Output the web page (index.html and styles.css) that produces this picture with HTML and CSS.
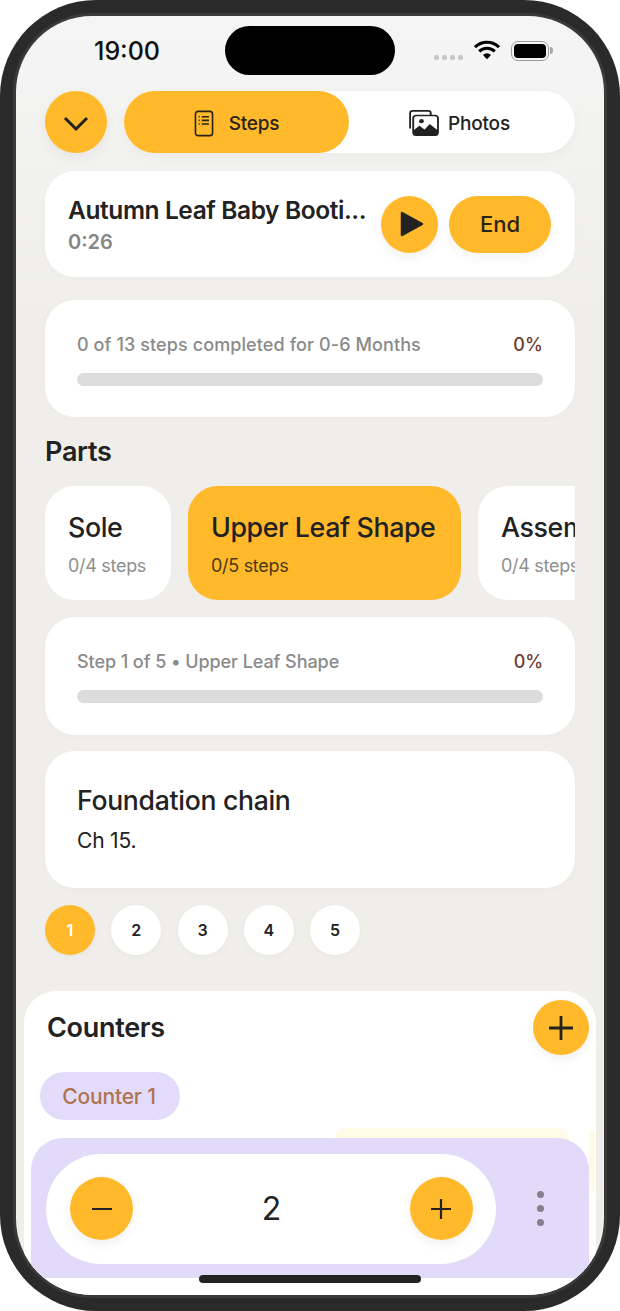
FILE: index.html
```html
<!DOCTYPE html>
<html lang="en">
<head>
    <meta charset="UTF-8">
    <meta name="viewport" content="width=device-width, initial-scale=1.0">
    <title>Crochet Project</title>
    <link rel="stylesheet" href="styles.css">
</head>
<body>
    <div class="phone">
        <div class="screen">
            <!-- Status bar -->
            <div class="status-bar">
                <span class="clock">19:00</span>
                <div class="island"></div>
                <div class="status-icons">
                    <div class="signal"><i></i><i></i><i></i><i></i></div>
                    <svg class="wifi" viewBox="0 0 26 20" width="26" height="20">
                        <path d="M1 7.2a17 17 0 0 1 24 0M5.2 11.4a11 11 0 0 1 15.6 0" fill="none" stroke="#000" stroke-width="3"/>
                        <path d="M9 14.9a5.6 5.6 0 0 1 8 0L13 19.2z" fill="#000"/>
                    </svg>
                    <div class="battery"><div class="battery-fill"></div></div>
                </div>
            </div>

            <!-- Top controls -->
            <div class="top-row">
                <button class="round-btn chevron-btn">
                    <svg viewBox="0 0 26 16" width="26" height="16"><path d="M2 2l11 11L24 2" fill="none" stroke="#222" stroke-width="3"/></svg>
                </button>
                <div class="tabs">
                    <div class="tab tab-active">
                        <svg viewBox="0 0 22 30" width="20" height="27" fill="none" stroke="#2a2418" stroke-width="1.8">
                            <rect x="1.5" y="1.5" width="19" height="27" rx="3"/>
                            <path d="M8.5 7.5h8M8.5 11.5h8M8.5 15.5h8M5 7.5h1.2M5 11.5h1.2M5 15.5h1.2"/>
                        </svg>
                        <span>Steps</span>
                    </div>
                    <div class="tab tab-photos">
                        <svg viewBox="0 0 32 30" width="33" height="28" preserveAspectRatio="none">
                            <path d="M4 21V4.5A2.5 2.5 0 0 1 6.500 2h15a2.500 2.500 0 0 1 2.500 2.500V7" fill="none" stroke="#222" stroke-width="1.800"/>
                            <rect x="7" y="7" width="24" height="21" rx="3" fill="#fff" stroke="#222" stroke-width="1.800"/>
                            <path d="M7 28v-5l6-5 5 4 5-6 8 7v5z" fill="#222"/>
                            <circle cx="15" cy="13" r="2.300" fill="#222"/>
                        </svg>
                        <span>Photos</span>
                    </div>
                </div>
            </div>

            <!-- Session -->
            <div class="card session">
                <div class="session-info">
                    <div class="session-title">Autumn Leaf Baby Booti...</div>
                    <div class="session-time">0:26</div>
                </div>
                <button class="round-btn play-btn">
                    <svg viewBox="0 0 24 28" width="24" height="28"><path d="M2 3l20 11L2 25z" fill="#222" stroke="#222" stroke-width="2.500" stroke-linejoin="round"/></svg>
                </button>
                <button class="end-btn">End</button>
            </div>

            <!-- Overall progress -->
            <div class="card progress-card overall">
                <div class="progress-head">
                    <span>0 of 13 steps completed for 0-6 Months</span>
                    <span class="percent">0%</span>
                </div>
                <div class="progress-track"></div>
            </div>

            <h2 class="parts-title">Parts</h2>

            <div class="parts">
                <div class="part part-sole">
                    <div class="part-name">Sole</div>
                    <div class="part-steps">0/4 steps</div>
                </div>
                <div class="part part-active">
                    <div class="part-name">Upper Leaf Shape</div>
                    <div class="part-steps">0/5 steps</div>
                </div>
                <div class="part">
                    <div class="part-name">Assembly</div>
                    <div class="part-steps">0/4 steps</div>
                </div>
            </div>

            <!-- Step progress -->
            <div class="card progress-card step-progress">
                <div class="progress-head">
                    <span>Step 1 of 5 • Upper Leaf Shape</span>
                    <span class="percent">0%</span>
                </div>
                <div class="progress-track"></div>
            </div>

            <div class="card step-card">
                <div class="step-title">Foundation chain</div>
                <div class="step-text">Ch 15.</div>
            </div>

            <div class="step-dots">
                <div class="step-dot dot-active">1</div>
                <div class="step-dot">2</div>
                <div class="step-dot">3</div>
                <div class="step-dot">4</div>
                <div class="step-dot">5</div>
            </div>

            <!-- Counters sheet -->
            <div class="sheet">
                <div class="glow glow-top"></div>
                <div class="glow glow-side"></div>
                <div class="sheet-head">
                    <h2>Counters</h2>
                    <button class="round-btn add-btn">
                        <svg viewBox="0 0 26 26" width="26" height="26"><path d="M13 1v24M1 13h24" stroke="#222" stroke-width="2.800" fill="none"/></svg>
                    </button>
                </div>
                <div class="counter-chip">Counter 1</div>
                <div class="counter-panel">
                    <div class="counter-pill">
                        <button class="round-btn count-btn">
                            <svg viewBox="0 0 22 22" width="22" height="22"><path d="M1 11h20" stroke="#222" stroke-width="2.200" fill="none"/></svg>
                        </button>
                        <span class="count">2</span>
                        <button class="round-btn count-btn">
                            <svg viewBox="0 0 22 22" width="22" height="22"><path d="M11 1v20M1 11h20" stroke="#222" stroke-width="2.200" fill="none"/></svg>
                        </button>
                    </div>
                    <div class="more"><i></i><i></i><i></i></div>
                </div>
            </div>

            <div class="home-bar"></div>
        </div>
    </div>
</body>
</html>
```

FILE: styles.css
```css
/* General */
* {
    box-sizing: border-box;
}

body {
    margin: 0;
    background-color: #fff;
    font-family: 'Inter', 'Noto Sans', sans-serif;
    color: #222;
}

button {
    border: none;
    padding: 0;
    font-family: inherit;
}

h2 {
    margin: 0;
}

/* Device frame */
.phone {
    width: 620px;
    height: 1311px;
    padding: 16px;
    background-color: #2a2a2a;
    border-radius: 96px;
}

.screen {
    position: relative;
    height: 100%;
    padding: 0 29px;
    overflow: hidden;
    border-radius: 76px;
    background: linear-gradient(#f5f5f5, #efeeeb 300px);
    box-shadow: 0 0 0 3px #3a3a38;
}

/* Status bar */
.status-bar {
    position: relative;
    height: 75px;
}

.clock {
    position: absolute;
    left: 49px;
    top: 20px;
    font-size: 25px;
    font-weight: 500;
    line-height: 30px;
    color: #111;
}

.island {
    position: absolute;
    left: 180px;
    top: 10px;
    width: 170px;
    height: 49px;
    border-radius: 25px;
    background-color: #000;
}

.status-icons {
    position: absolute;
    left: 389px;
    top: 24px;
    display: flex;
    align-items: flex-start;
}

.signal {
    display: flex;
    gap: 3px;
    margin-top: 15px;
}

.signal i {
    width: 5px;
    height: 5px;
    border-radius: 50%;
    background-color: #c4c4c4;
}

.wifi {
    margin-left: 11px;
}

.battery {
    position: relative;
    width: 38px;
    height: 20px;
    margin-left: 11px;
    margin-top: 1px;
    padding: 2px;
    border: 1.5px solid #9a9a9a;
    border-radius: 7px;
}

.battery::after {
    content: "";
    position: absolute;
    right: -5px;
    top: 5px;
    width: 3px;
    height: 7px;
    border-radius: 0 3px 3px 0;
    background-color: #a5a5a5;
}

.battery-fill {
    height: 100%;
    border-radius: 4px;
    background-color: #000;
}

/* Shared round buttons */
.round-btn {
    display: flex;
    align-items: center;
    justify-content: center;
    flex-shrink: 0;
    border-radius: 50%;
    background-color: #ffb92b;
    box-shadow: 0 4px 12px rgba(0, 0, 0, 0.06);
}

/* Top controls */
.top-row {
    display: flex;
    gap: 17px;
    height: 62px;
}

.chevron-btn {
    width: 62px;
    height: 62px;
    padding-top: 3px;
}

.tabs {
    flex: 1;
    display: flex;
    border-radius: 31px;
    background-color: #fff;
    box-shadow: 0 4px 12px rgba(0, 0, 0, 0.03);
}

.tab {
    width: 225px;
    display: flex;
    align-items: center;
    justify-content: center;
    gap: 15px;
    padding-top: 2px;
    border-radius: 31px;
    font-size: 19px;
    font-weight: 500;
    letter-spacing: -0.2px;
}

.tab-active {
    background-color: #ffb92b;
    color: #2a2418;
}

.tab-photos {
    gap: 9px;
    padding-right: 7px;
}

/* Cards */
.card {
    background-color: #fff;
    border-radius: 30px;
    box-shadow: 0 2px 8px rgba(0, 0, 0, 0.02);
}

.session {
    display: flex;
    align-items: center;
    height: 106px;
    margin-top: 18px;
    padding: 0 24px 0 23px;
}

.session-info {
    flex: 1;
    min-width: 0;
    padding-top: 3px;
}

.session-title {
    font-size: 24.500px;
    font-weight: 600;
    letter-spacing: -0.4px;
    line-height: 30px;
    white-space: nowrap;
}

.session-time {
    margin-top: 3px;
    font-size: 20px;
    font-weight: 600;
    line-height: 28px;
    color: #858585;
}

.play-btn {
    width: 57px;
    height: 57px;
    padding-left: 5px;
}

.end-btn {
    width: 102px;
    height: 57px;
    margin-left: 11px;
    border-radius: 29px;
    background-color: #ffb92b;
    font-size: 22px;
    font-weight: 500;
    color: #2a2418;
    box-shadow: 0 4px 12px rgba(0, 0, 0, 0.05);
}

/* Progress cards */
.progress-card {
    height: 118px;
    padding: 32px 32px 0;
}

.overall {
    height: 117px;
    margin-top: 23px;
}

.progress-head {
    display: flex;
    justify-content: space-between;
    font-size: 18px;
    font-weight: 500;
    letter-spacing: 0.1px;
    line-height: 26px;
    color: #8a8a8a;
}

.step-progress .progress-head {
    letter-spacing: -0.07px;
}

.percent {
    color: #6e3b33;
}

.progress-track {
    height: 13px;
    margin-top: 15px;
    border-radius: 7px;
    background-color: #dcdcdc;
}

/* Parts */
.parts-title {
    margin-top: 18px;
    font-size: 27px;
    font-weight: 600;
    letter-spacing: -0.3px;
    line-height: 34px;
}

.parts {
    display: flex;
    gap: 17px;
    margin-top: 17px;
    overflow: hidden;
}

.part {
    flex-shrink: 0;
    height: 114px;
    padding: 24px 23px 0;
    border-radius: 30px;
    background-color: #fff;
}

.part-sole {
    width: 126px;
}

.part-active {
    width: 273px;
    background-color: #ffb92b;
}

.part-name {
    font-size: 26.800px;
    font-weight: 500;
    letter-spacing: -0.4px;
    line-height: 34px;
    white-space: nowrap;
}

.part-steps {
    margin-top: 10px;
    font-size: 18px;
    letter-spacing: -0.3px;
    line-height: 24px;
    color: #8f8f8f;
}

.part-active .part-steps {
    color: #4a3a15;
}

.step-progress {
    margin-top: 17px;
}

/* Step text */
.step-card {
    height: 137px;
    margin-top: 16px;
    padding: 32px 32px 0;
}

.step-title {
    font-size: 26.600px;
    font-weight: 500;
    letter-spacing: -0.3px;
    line-height: 34px;
}

.step-text {
    margin-top: 9px;
    font-size: 21px;
    line-height: 30px;
    letter-spacing: -0.2px;
}

.step-dots {
    display: flex;
    gap: 16.250px;
    margin-top: 17px;
}

.step-dot {
    display: flex;
    align-items: center;
    justify-content: center;
    width: 50px;
    height: 50px;
    border-radius: 50%;
    background-color: #fff;
    font-size: 16px;
    font-weight: 600;
    box-shadow: 0 2px 6px rgba(0, 0, 0, 0.03);
}

.dot-active {
    background-color: #ffb92b;
    color: #fff;
}

/* Counters sheet */
.sheet {
    position: relative;
    height: 304px;
    margin: 36px -21px 0;
    padding: 9px 7px 0 16px;
    border-radius: 32px 32px 0 0;
    background-color: #fff;
}

.glow {
    position: absolute;
    background-color: #fefce6;
}

.glow-top {
    left: 310px;
    top: 137px;
    width: 235px;
    height: 12px;
    border-radius: 12px 12px 0 0;
}

.glow-side {
    right: 1px;
    top: 140px;
    width: 6px;
    height: 70px;
    background: linear-gradient(#fefce6 70%, #fff);
}

.sheet-head {
    display: flex;
    justify-content: space-between;
    align-items: center;
    padding-left: 7px;
}

.sheet-head h2 {
    font-size: 27px;
    font-weight: 600;
    letter-spacing: -0.3px;
}

.add-btn {
    width: 56px;
    height: 55px;
}

.counter-chip {
    width: 140px;
    height: 48px;
    margin-top: 17px;
    padding-right: 2px;
    border-radius: 24px;
    background-color: #e2dcfa;
    font-size: 21px;
    font-weight: 500;
    letter-spacing: -0.15px;
    line-height: 50px;
    text-align: center;
    color: #b07350;
}

.counter-panel {
    position: relative;
    display: flex;
    align-items: center;
    width: 558px;
    height: 140px;
    margin: 18px 0 0 -9px;
    padding: 0 15px 25px;
    border-radius: 32px 32px 0 0;
    background-color: #e1dbf9;
}

.counter-pill {
    display: flex;
    align-items: center;
    justify-content: space-between;
    width: 450px;
    height: 110px;
    padding: 0 23px 0 24px;
    margin-top: 26px;
    border-radius: 55px;
    background-color: #fff;
}

.count-btn {
    width: 63px;
    height: 63px;
}

.count {
    font-size: 32px;
    font-weight: 400;
}

.more {
    display: flex;
    flex-direction: column;
    gap: 7px;
    margin: 26px 0 0 41px;
}

.more i {
    width: 7px;
    height: 7px;
    border-radius: 50%;
    background-color: #85808f;
}

/* Home indicator */
.home-bar {
    position: absolute;
    left: 183px;
    bottom: 12px;
    width: 222px;
    height: 8px;
    border-radius: 4px;
    background-color: #222;
}
```
